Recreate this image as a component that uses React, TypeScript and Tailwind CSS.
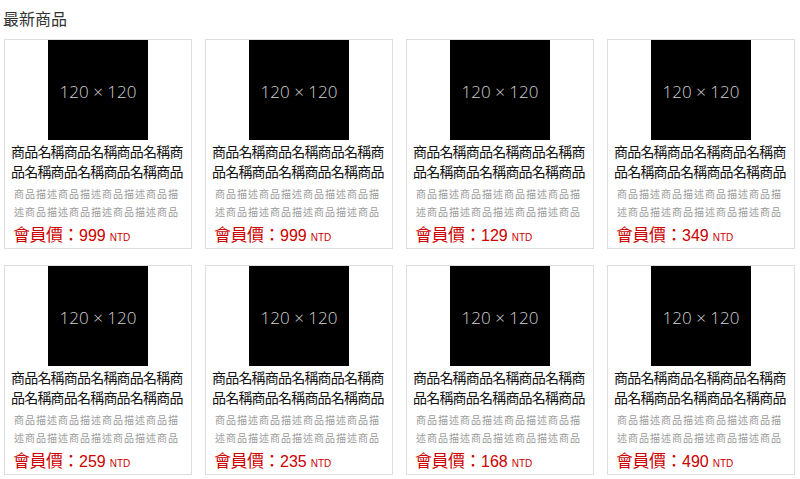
const products = [
  { price: 999 },
  { price: 999 },
  { price: 129 },
  { price: 349 },
  { price: 259 },
  { price: 235 },
  { price: 168 },
  { price: 490 },
];

const NAME = "商品名稱".repeat(6) + "商品";
const DESC = "商品描述".repeat(7) + "商品";

const ProductCard = ({ price }: { price: number }) => (
  <div className="h-[210px] border border-[#dddddd] bg-white flex flex-col overflow-hidden">
    <div className="flex justify-center">
      <div className="w-[100px] h-[100px] bg-black flex items-center justify-center pt-[4px]">
        <span className="text-[17px] text-[#d2d2d2] font-light font-['Open_Sans',sans-serif]">
          120 × 120
        </span>
      </div>
    </div>
    <p className="pt-[1px] px-[6px] text-[14px] leading-[20px] tracking-[-0.8px] text-[#111] h-[41px] overflow-hidden">
      {NAME}
    </p>
    <p className="mt-[4px] px-[9px] text-[10px] leading-[18px] tracking-[1px] text-[#999] h-[36px] overflow-hidden">
      {DESC}
    </p>
    <div className="mt-auto px-[8px] text-[#cc0000] leading-[20px] whitespace-nowrap">
      <span className="text-[17px] tracking-[-0.5px]">會員價：</span>
      <span className="text-[16px] font-['Liberation_Sans',sans-serif]">{price}</span>
      <span className="ml-[4px] text-[10px] font-['Liberation_Sans',sans-serif]">NTD</span>
    </div>
  </div>
);

export default function App() {
  return (
    <div className="w-[800px] h-[479px] bg-white font-['Noto_Sans_CJK_TC','Liberation_Sans',sans-serif]">
      <h2 className="pl-[3px] pt-[7px] text-[16px] leading-[22px] text-[#333]">最新商品</h2>
      <div className="mt-[10px] pl-[4px] grid grid-cols-[repeat(4,188px)] gap-x-[13px] gap-y-[16px]">
        {products.map((p, i) => (
          <ProductCard key={i} price={p.price} />
        ))}
      </div>
    </div>
  );
}
